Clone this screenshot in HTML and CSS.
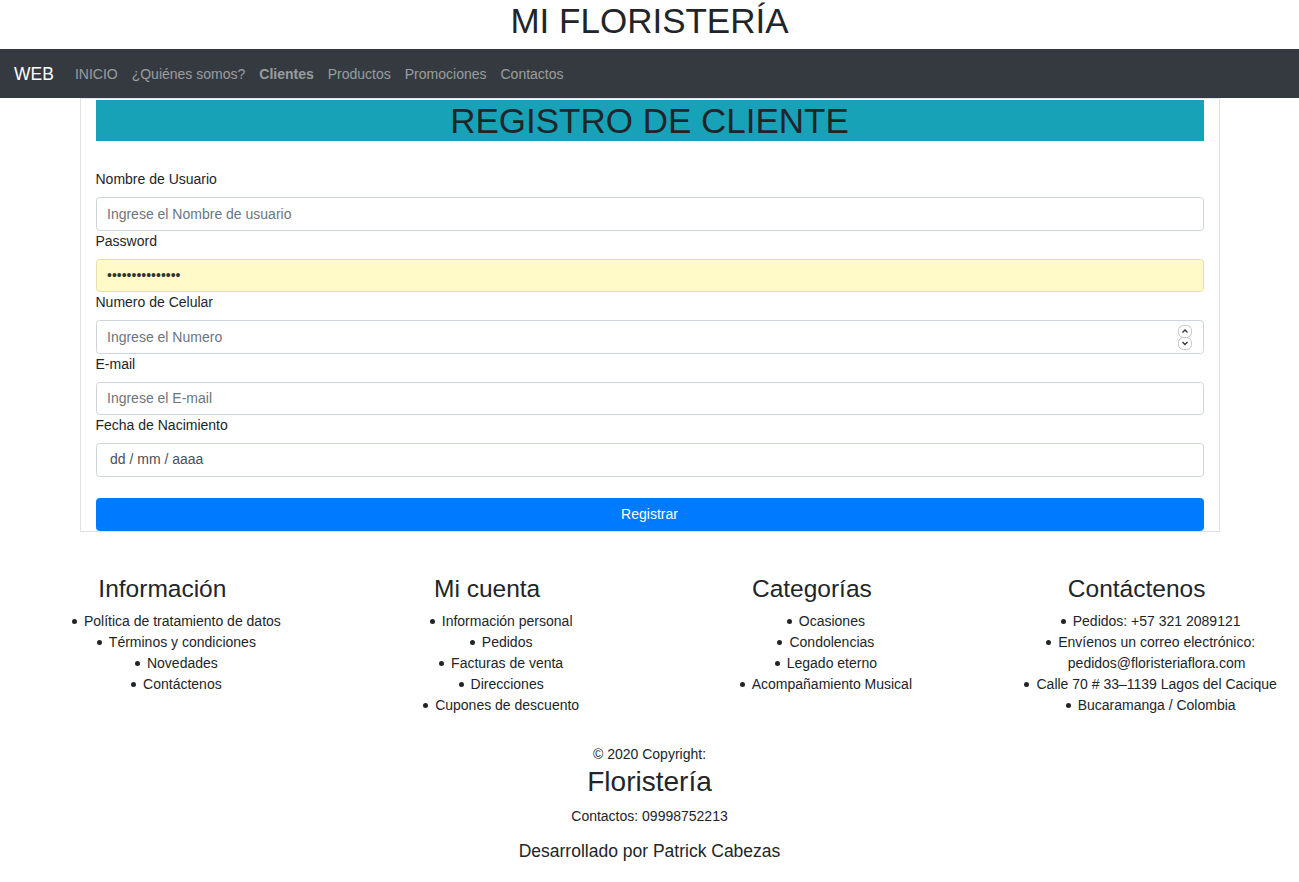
FILE: index.html
```html
<!DOCTYPE html>
<html lang="es">
<head>
<meta charset="utf-8">
<title>Mi Floristería</title>
<link rel="stylesheet" href="styles.css">
</head>
<body>
<h1 class="site-title">MI FLORISTERÍA</h1>
<nav class="navbar">
  <a class="brand" href="#">WEB</a>
  <ul class="nav">
    <li><a class="nav-link" href="#">INICIO</a></li>
    <li><a class="nav-link" href="#">¿Quiénes somos?</a></li>
    <li><a class="nav-link active" href="#">Clientes</a></li>
    <li><a class="nav-link" href="#">Productos</a></li>
    <li><a class="nav-link" href="#">Promociones</a></li>
    <li><a class="nav-link" href="#">Contactos</a></li>
  </ul>
</nav>

<main class="container">
  <h1 class="register-title">REGISTRO DE CLIENTE</h1>
  <form class="form">
    <label class="label" for="user">Nombre de Usuario</label>
    <input class="control" id="user" type="text" placeholder="Ingrese el Nombre de usuario">
    <label class="label" for="pass">Password</label>
    <input class="control autofill" id="pass" type="password" value="abcdefghijklmno">
    <label class="label" for="num">Numero de Celular</label>
    <div class="number-wrap">
      <input class="control" id="num" type="text" placeholder="Ingrese el Numero">
      <svg class="spinner" width="14" height="25" viewBox="0 0 14 25" aria-hidden="true">
        <rect x="0.5" y="0.5" width="13" height="12" rx="5" fill="#fff" stroke="#c4c4c4"/>
        <rect x="0.5" y="12.5" width="13" height="12" rx="5" fill="#fff" stroke="#c4c4c4"/>
        <path d="M4.5 7.5 L7 5 L9.5 7.5" fill="none" stroke="#333" stroke-width="1.3"/>
        <path d="M4.5 17 L7 19.5 L9.5 17" fill="none" stroke="#333" stroke-width="1.3"/>
      </svg>
    </div>
    <label class="label" for="mail">E-mail</label>
    <input class="control" id="mail" type="text" placeholder="Ingrese el E-mail">
    <label class="label" for="date">Fecha de Nacimiento</label>
    <div class="control date" id="date">dd / mm / aaaa</div>
    <button class="btn" type="button">Registrar</button>
  </form>
</main>

<footer class="footer">
  <div class="cols">
    <div class="col">
      <h3 class="col-title">Información</h3>
      <ul class="list">
        <li><span class="item">Política de tratamiento de datos</span></li>
        <li><span class="item">Términos y condiciones</span></li>
        <li><span class="item">Novedades</span></li>
        <li><span class="item">Contáctenos</span></li>
      </ul>
    </div>
    <div class="col">
      <h3 class="col-title">Mi cuenta</h3>
      <ul class="list">
        <li><span class="item">Información personal</span></li>
        <li><span class="item">Pedidos</span></li>
        <li><span class="item">Facturas de venta</span></li>
        <li><span class="item">Direcciones</span></li>
        <li><span class="item">Cupones de descuento</span></li>
      </ul>
    </div>
    <div class="col">
      <h3 class="col-title">Categorías</h3>
      <ul class="list">
        <li><span class="item">Ocasiones</span></li>
        <li><span class="item">Condolencias</span></li>
        <li><span class="item">Legado eterno</span></li>
        <li><span class="item">Acompañamiento Musical</span></li>
      </ul>
    </div>
    <div class="col">
      <h3 class="col-title">Contáctenos</h3>
      <ul class="list">
        <li><span class="item">Pedidos: +57 321 2089121</span></li>
        <li><span class="item">Envíenos un correo electrónico: pedidos@floristeriaflora.com</span></li>
        <li><span class="item">Calle 70 # 33–1139 Lagos del Cacique</span></li>
        <li><span class="item">Bucaramanga / Colombia</span></li>
      </ul>
    </div>
  </div>
  <div class="bottom">
    <p class="copy">© 2020 Copyright:</p>
    <h2 class="brand-name">Floristería</h2>
    <p class="contacts">Contactos: 09998752213</p>
    <h5 class="dev">Desarrollado por Patrick Cabezas</h5>
  </div>
</footer>
</body>
</html>
```
FILE: styles.css
```css
* { box-sizing: border-box; }

body {
  margin: 0;
  font-family: "Liberation Sans", Arial, sans-serif;
  font-size: 14px;
  line-height: 1.5;
  color: #212529;
  background: #fff;
}

.site-title {
  margin: 0 0 7px;
  font-size: 35px;
  font-weight: 500;
  line-height: 1.2;
  text-align: center;
}

.navbar {
  display: flex;
  align-items: center;
  background: #343a40;
  padding: 8px 14px 6px;
}

.brand {
  color: #fff;
  text-decoration: none;
  font-size: 17.5px;
  line-height: 26.25px;
  padding: 4.375px 0;
  margin-right: 14px;
}

.nav {
  display: flex;
  list-style: none;
  margin: 0;
  padding: 0;
}

.nav-link {
  display: block;
  padding: 7px;
  color: rgba(255, 255, 255, 0.5);
  text-decoration: none;
  line-height: 21px;
}

.nav-link.active { font-weight: bold; }

.container {
  width: 1140px;
  margin: 0 auto;
  border: 1px solid #dee2e6;
  border-top-color: #e3e6e9;
  padding: 1px 15px 0;
}

.register-title {
  margin: 0 0 7px;
  background: #17a2b8;
  font-size: 35px;
  font-weight: 500;
  line-height: 41px;
  text-align: center;
}

.form {
  padding-top: 21px;
  display: flex;
  flex-direction: column;
}

.label {
  display: block;
  line-height: 21px;
  margin-bottom: 7px;
}

.control {
  display: block;
  width: 100%;
  height: 33.5px;
  padding: 5.25px 10.5px;
  font-family: inherit;
  font-size: 14px;
  line-height: 21px;
  color: #495057;
  background: #fff;
  border: 1px solid #ced4da;
  border-radius: 3.5px;
}

.control::placeholder { color: #6c757d; opacity: 1; }

.autofill {
  background: #fffac8;
  border-color: #e6e0a6;
  color: #333;
}

.number-wrap { position: relative; }

.spinner {
  position: absolute;
  right: 12px;
  top: 4.5px;
}

.date {
  padding-left: 13.5px;
  color: #495057;
}

.btn {
  display: block;
  width: 100%;
  margin-top: 21px;
  padding: 5.25px 10.5px;
  font-family: inherit;
  font-size: 14px;
  line-height: 21px;
  color: #fff;
  background: #007bff;
  border: 1px solid #007bff;
  border-radius: 3.5px;
  text-align: center;
}

.footer { margin-top: 42px; }

.cols {
  display: grid;
  grid-template-columns: repeat(4, 1fr);
}

.col { padding: 0 15px; }

.col-title {
  margin: 0 0 8px;
  font-size: 24.5px;
  font-weight: 500;
  line-height: 1.2;
  text-align: center;
}

.list {
  margin: 0 0 14px;
  padding-left: 40px;
  list-style: none;
  text-align: center;
  line-height: 21px;
}

.item { position: relative; }

.item::before {
  content: "";
  position: absolute;
  left: -12px;
  top: 6px;
  width: 5px;
  height: 5px;
  border-radius: 50%;
  background: #212529;
}

.bottom {
  text-align: center;
  padding-top: 14px;
}

.copy { margin: 0; }

.brand-name {
  margin: 0 0 7px;
  font-size: 28px;
  font-weight: 500;
  line-height: 1.2;
}

.contacts { margin: 0 0 14px; }

.dev {
  margin: 0 0 7px;
  font-size: 17.5px;
  font-weight: 500;
  line-height: 1.2;
}
```
